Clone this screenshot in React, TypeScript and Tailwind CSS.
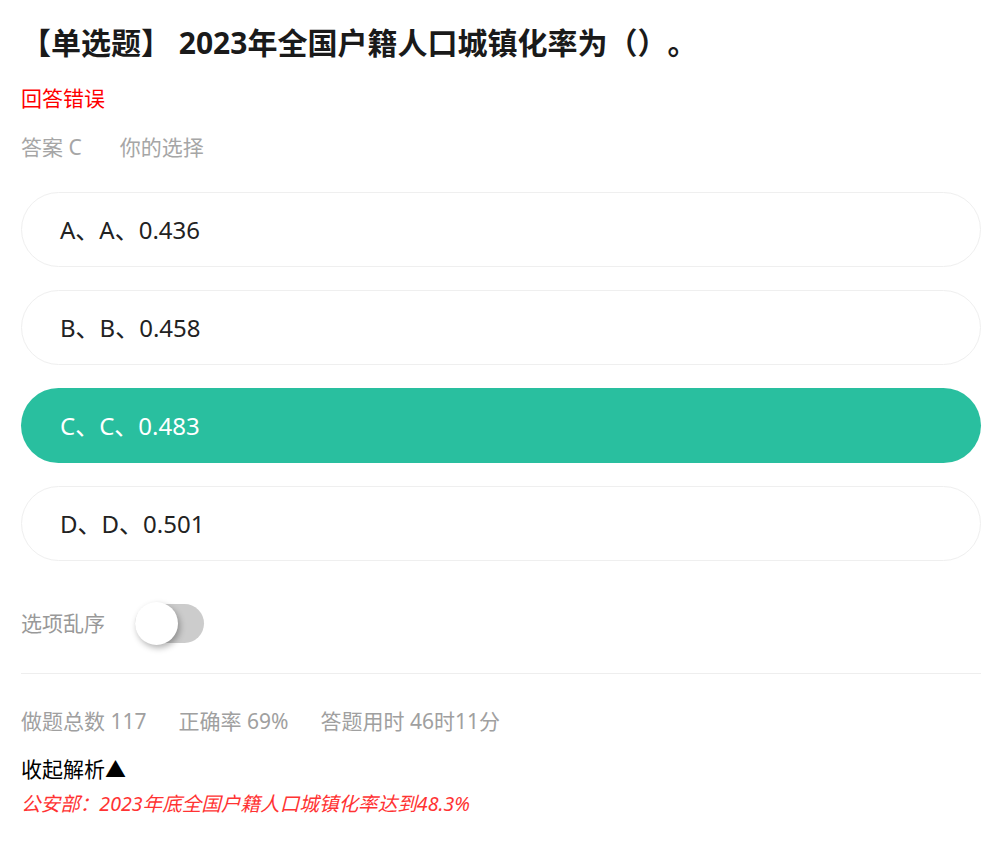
const font = {
  fontFamily: '"Noto Sans", "Noto Sans CJK SC", sans-serif',
};

const options = [
  { label: "A、A、0.436", active: false },
  { label: "B、B、0.458", active: false },
  { label: "C、C、0.483", active: true },
  { label: "D、D、0.501", active: false },
];

export default function App() {
  return (
    <div className="min-h-screen bg-white px-[21px] pt-[20px] [text-spacing-trim:space-all]" style={font}>
      <h1 className="text-[30px] font-bold leading-[46px] text-[#1a1a1a]">
        【单选题】 2023年全国户籍人口城镇化率为（）。
      </h1>
      <div className="mt-[18px] text-[21px] leading-[28px] text-[#ff0000]">回答错误</div>
      <div className="mt-[21px] flex gap-[38px] text-[21px] leading-[28px] text-[#a6a6a6]">
        <span>答案 C</span>
        <span>你的选择</span>
      </div>

      <div className="mt-[31px] flex flex-col gap-[23px]">
        {options.map((o) => (
          <div
            key={o.label}
            className={
              o.active
                ? "flex h-[75px] items-center rounded-full bg-[#29bf9f] pl-[39px] text-[24px] text-white"
                : "flex h-[75px] items-center rounded-full border border-[#efefef] bg-white pl-[38px] text-[24px] text-[#222]"
            }
          >
            {o.label}
          </div>
        ))}
      </div>

      <div className="mt-[43px] flex items-center">
        <span className="text-[21px] text-[#999]">选项乱序</span>
        <div className="relative ml-[30px] h-[39px] w-[69px] rounded-full bg-[#cccccc]">
          <div className="absolute left-0 top-[-2px] h-[43px] w-[43px] rounded-full bg-white shadow-[2px_3px_6px_rgba(0,0,0,0.3)]" />
        </div>
      </div>

      <div className="mt-[30px] h-px w-full bg-[#eeeeee]" />

      <div className="mt-[33px] flex gap-[32px] text-[21px] leading-[28px] text-[#a0a0a0]">
        <span>做题总数 117</span>
        <span>正确率 69%</span>
        <span>答题用时 46时11分</span>
      </div>
      <div className="mt-[20px] text-[21px] leading-[28px] text-black">收起解析▲</div>
      <div className="mt-[7px] text-[19.6px] italic leading-[28px] text-[#ff3333]">
        公安部：2023年底全国户籍人口城镇化率达到48.3%
      </div>
    </div>
  );
}
